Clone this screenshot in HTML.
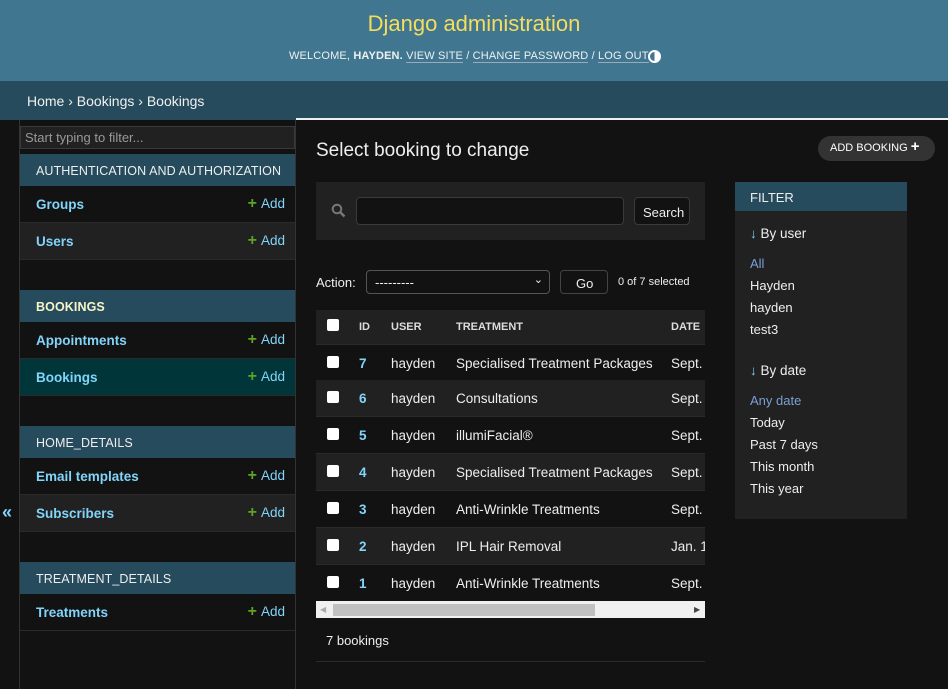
<!DOCTYPE html>
<html><head><meta charset="utf-8"><style>
*{box-sizing:border-box;margin:0;padding:0}
body{width:948px;height:689px;overflow:hidden;background:#121212;font-family:"Liberation Sans",sans-serif;color:#eee;position:relative;font-size:13px}
.a{position:absolute;white-space:nowrap}
.hdr{left:0;top:0;width:948px;height:81px;background:#417690}
.bc{left:0;top:81px;width:948px;height:39px;background:#264b5d;color:#f0f0f0;font-size:14px;padding:12px 0 0 27px}
.cap{left:20px;width:275px;height:32px;background:#264b5d;color:#eee;font-size:12.5px;padding:10px 0 0 16px;letter-spacing:.1px}
.row{left:20px;width:275px;height:37px;border-bottom:1px solid #2a2a2a;color:#81d4fa;font-weight:bold;font-size:13.5px;padding:11px 0 0 16px}
.add{position:absolute;right:10px;top:10px;font-weight:normal;color:#81d4fa;font-size:13.5px}
.add b{color:#5fa225;font-size:16px;margin-right:4px;line-height:10px}
.tr{left:316px;width:389px;height:37px;border-bottom:1px solid #2a2a2a;font-size:13.5px;color:#eee;overflow:hidden}
.tr span{position:absolute;top:11px;white-space:nowrap}
.cb{position:absolute;left:11px;top:11px;width:12px;height:12px;background:#fff;border-radius:2px}
.fl{left:750px;font-size:13px;color:#eee}
</style></head><body>
<div class="a hdr"></div>
<div class="a" style="left:0;top:11px;width:948px;text-align:center;color:#f5dd5d;font-size:22px">Django administration</div>
<div class="a" style="left:289px;top:50px;font-size:11px;color:#f0f0f0;letter-spacing:0.15px">WELCOME, <b>HAYDEN.</b> <span style="border-bottom:1px solid #9ab">VIEW SITE</span> / <span style="border-bottom:1px solid #9ab">CHANGE PASSWORD</span> / <span style="border-bottom:1px solid #9ab">LOG OUT</span></div>
<div class="a" style="left:648px;top:50px;width:13px;height:13px;border-radius:50%;border:2px solid #fff;background:linear-gradient(90deg,#417690 50%,#fff 50%)"></div>
<div class="a bc">Home › Bookings › Bookings</div>

<div class="a" style="left:19px;top:120px;width:1px;height:569px;background:#333"></div>
<div class="a" style="left:295px;top:120px;width:1px;height:569px;background:#333"></div>
<div class="a" style="left:296px;top:118px;width:652px;height:2px;background:#eee"></div>
<div class="a" style="left:2px;top:502px;color:#81d4fa;font-size:18px;font-weight:bold">«</div>
<div class="a" style="left:20px;top:126px;width:275px;height:23px;background:#212121;border:1px solid #3a3a3a;color:#999;font-size:13px;padding:3px 0 0 4px">Start typing to filter...</div>

<div class="a cap" style="top:154px">AUTHENTICATION AND AUTHORIZATION</div>
<div class="a row" style="top:186px">Groups<span class="add"><b>+</b>Add</span></div>
<div class="a row" style="top:223px;background:#212121">Users<span class="add"><b>+</b>Add</span></div>
<div class="a cap" style="top:290px;color:#f5f5c8;font-weight:bold">BOOKINGS</div>
<div class="a row" style="top:322px">Appointments<span class="add"><b>+</b>Add</span></div>
<div class="a row" style="top:359px;background:#00363a">Bookings<span class="add"><b>+</b>Add</span></div>
<div class="a cap" style="top:426px">HOME_DETAILS</div>
<div class="a row" style="top:458px">Email templates<span class="add"><b>+</b>Add</span></div>
<div class="a row" style="top:495px;background:#212121">Subscribers<span class="add"><b>+</b>Add</span></div>
<div class="a cap" style="top:562px">TREATMENT_DETAILS</div>
<div class="a row" style="top:594px">Treatments<span class="add"><b>+</b>Add</span></div>

<div class="a" style="left:316px;top:140px;font-size:19px;color:#eee">Select booking to change</div>
<div class="a" style="left:818px;top:136px;width:117px;height:25px;border-radius:13px;background:#333;color:#fff;font-size:11px;padding:6px 0 0 12px">ADD BOOKING <b style="font-size:15px;line-height:10px">+</b></div>

<div class="a" style="left:316px;top:182px;width:389px;height:58px;background:#212121"></div>
<svg class="a" style="left:331px;top:203px" width="15" height="15" viewBox="0 0 15 15"><circle cx="6" cy="6" r="4.3" fill="none" stroke="#777" stroke-width="2"/><path d="M9 9l4.5 4.5" stroke="#777" stroke-width="2.4"/></svg>
<div class="a" style="left:356px;top:197px;width:268px;height:28px;background:#121212;border:1px solid #3a3a3a;border-radius:4px"></div>
<div class="a" style="left:634px;top:197px;width:56px;height:28px;background:#121212;border:1px solid #3a3a3a;border-radius:4px;font-size:13px;padding:7px 0 0 8px">Search</div>

<div class="a" style="left:316px;top:275px;font-size:13px">Action:</div>
<div class="a" style="left:366px;top:270px;width:184px;height:24px;background:#121212;border:1px solid #555;border-radius:4px;padding:4px 0 0 8px;font-size:13px">---------<span style="position:absolute;right:6px;top:2px;font-size:11px">&#8964;</span></div>
<div class="a" style="left:560px;top:270px;width:48px;height:24px;background:#121212;border:1px solid #444;border-radius:4px;padding:5px 0 0 15px">Go</div>
<div class="a" style="left:618px;top:276px;font-size:11px">0 of 7 selected</div>

<div class="a tr" style="top:310px;height:35px;background:#212121;font-size:11px;font-weight:bold;color:#ddd"><div class="cb" style="top:9px"></div><span style="left:43px">ID</span><span style="left:75px">USER</span><span style="left:140px">TREATMENT</span><span style="left:355px">DATE</span></div>
<div class="a tr" style="top:345px"><div class="cb"></div><span style="left:43px;color:#81d4fa;font-weight:bold">7</span><span style="left:75px">hayden</span><span style="left:140px">Specialised Treatment Packages</span><span style="left:355px">Sept.</span></div>
<div class="a tr" style="top:380px;background:#212121"><div class="cb"></div><span style="left:43px;color:#81d4fa;font-weight:bold">6</span><span style="left:75px">hayden</span><span style="left:140px">Consultations</span><span style="left:355px">Sept.</span></div>
<div class="a tr" style="top:417px"><div class="cb"></div><span style="left:43px;color:#81d4fa;font-weight:bold">5</span><span style="left:75px">hayden</span><span style="left:140px">illumiFacial®</span><span style="left:355px">Sept.</span></div>
<div class="a tr" style="top:454px;background:#212121"><div class="cb"></div><span style="left:43px;color:#81d4fa;font-weight:bold">4</span><span style="left:75px">hayden</span><span style="left:140px">Specialised Treatment Packages</span><span style="left:355px">Sept.</span></div>
<div class="a tr" style="top:491px"><div class="cb"></div><span style="left:43px;color:#81d4fa;font-weight:bold">3</span><span style="left:75px">hayden</span><span style="left:140px">Anti-Wrinkle Treatments</span><span style="left:355px">Sept.</span></div>
<div class="a tr" style="top:528px;background:#212121"><div class="cb"></div><span style="left:43px;color:#81d4fa;font-weight:bold">2</span><span style="left:75px">hayden</span><span style="left:140px">IPL Hair Removal</span><span style="left:355px">Jan. 1</span></div>
<div class="a tr" style="top:565px;border:none"><div class="cb"></div><span style="left:43px;color:#81d4fa;font-weight:bold">1</span><span style="left:75px">hayden</span><span style="left:140px">Anti-Wrinkle Treatments</span><span style="left:355px">Sept.</span></div>
<div class="a" style="left:316px;top:601px;width:389px;height:17px;background:#f0f0f0"></div>
<div class="a" style="left:333px;top:604px;width:262px;height:12px;background:#c0c0c0"></div>
<div class="a" style="left:320px;top:605px;font-size:8px;color:#aaa">◀</div>
<div class="a" style="left:694px;top:605px;font-size:8px;color:#444">▶</div>
<div class="a" style="left:326px;top:633px;font-size:13px">7 bookings</div>
<div class="a" style="left:316px;top:661px;width:389px;height:1px;background:#2a2a2a"></div>

<div class="a" style="left:735px;top:182px;width:172px;height:337px;background:#212121"></div>
<div class="a" style="left:735px;top:182px;width:172px;height:29px;background:#264b5d;padding:8px 0 0 15px;font-size:13px;color:#eee">FILTER</div>
<div class="a fl" style="top:226px;font-size:13.5px"><span style="color:#81d4fa">↓</span> By user</div>
<div class="a fl" style="top:256px;color:#7a9fd6">All</div>
<div class="a fl" style="top:278px">Hayden</div>
<div class="a fl" style="top:300px">hayden</div>
<div class="a fl" style="top:322px">test3</div>
<div class="a fl" style="top:363px;font-size:13.5px"><span style="color:#81d4fa">↓</span> By date</div>
<div class="a fl" style="top:393px;color:#7a9fd6">Any date</div>
<div class="a fl" style="top:415px">Today</div>
<div class="a fl" style="top:437px">Past 7 days</div>
<div class="a fl" style="top:459px">This month</div>
<div class="a fl" style="top:481px">This year</div>
</body></html>
